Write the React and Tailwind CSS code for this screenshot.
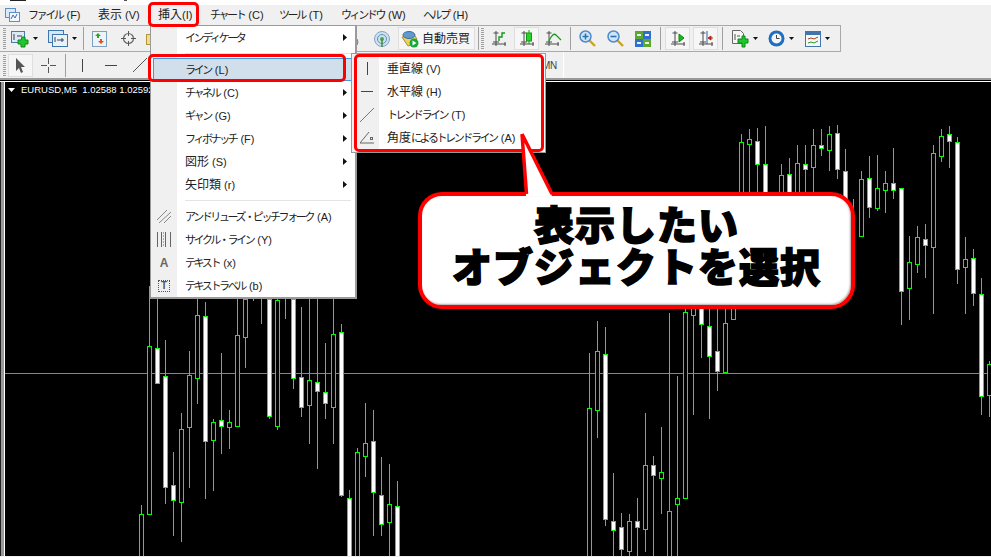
const FONT = "font-['Liberation_Sans','Noto_Sans_CJK_JP',sans-serif]";

// chart data: [x, wickTop, wickBottom, bodyTop, bodyBottom, filled]
const CANDLES = [
  [141, 506, 557, 515, 557, 0], [149, 287, 515, 347, 515, 0], [157, 300, 384, 349, 384, 1],
  [165, 341, 505, 377, 488, 1], [173, 453, 537, 486, 501, 1], [181, 414, 543, 430, 503, 0],
  [189, 352, 489, 376, 428, 0], [197, 300, 405, 316, 379, 0], [205, 303, 500, 317, 442, 1],
  [213, 420, 492, 423, 441, 0], [221, 354, 455, 421, 427, 1], [229, 411, 450, 423, 428, 0],
  [237, 300, 427, 336, 427, 0], [245, 300, 369, 300, 338, 0], [253, 298, 302, 300, 300, 0],
  [261, 298, 325, 300, 300, 0], [269, 298, 420, 300, 417, 1], [277, 298, 431, 301, 427, 0],
  [285, 298, 320, 300, 300, 0], [293, 298, 390, 300, 379, 1], [301, 308, 418, 378, 408, 1],
  [309, 298, 445, 381, 406, 0], [317, 298, 470, 383, 392, 1], [325, 344, 420, 393, 404, 1],
  [333, 298, 445, 335, 408, 0], [341, 325, 498, 333, 496, 1], [349, 491, 557, 499, 557, 1],
  [357, 449, 557, 453, 557, 0], [365, 404, 478, 444, 457, 0], [373, 411, 537, 442, 493, 1],
  [381, 458, 537, 496, 525, 1], [389, 465, 557, 505, 523, 0], [397, 482, 557, 507, 557, 1],
  [589, 354, 557, 409, 557, 0], [597, 322, 439, 352, 411, 0], [605, 328, 527, 355, 520, 1],
  [613, 474, 557, 522, 531, 1], [621, 514, 557, 528, 550, 1], [629, 515, 557, 522, 552, 0],
  [637, 499, 557, 522, 528, 1], [645, 414, 553, 466, 530, 0], [653, 457, 557, 466, 476, 1],
  [661, 428, 515, 473, 479, 0], [669, 314, 557, 512, 557, 0], [677, 377, 557, 499, 505, 0],
  [685, 300, 499, 313, 499, 0], [693, 300, 416, 300, 316, 0], [701, 300, 359, 300, 325, 1],
  [709, 300, 420, 327, 357, 1], [717, 300, 392, 352, 372, 1], [725, 300, 373, 324, 373, 0],
  [733, 300, 320, 300, 320, 0], [741, 135, 200, 143, 200, 0], [749, 130, 200, 140, 145, 0],
  [757, 129, 200, 142, 165, 1], [765, 127, 200, 165, 200, 1], [781, 165, 200, 176, 200, 0],
  [789, 159, 200, 175, 200, 1], [797, 146, 200, 164, 200, 0], [805, 146, 200, 165, 170, 1],
  [813, 130, 200, 146, 168, 0], [821, 130, 157, 146, 149, 1], [829, 127, 172, 135, 151, 0],
  [837, 126, 180, 134, 170, 1], [845, 150, 200, 172, 200, 1], [853, 200, 236, 200, 200, 0],
  [861, 172, 237, 180, 237, 0], [869, 157, 219, 179, 208, 1], [877, 156, 212, 189, 209, 0],
  [885, 172, 214, 184, 191, 0], [893, 149, 200, 184, 191, 1], [901, 189, 326, 189, 292, 1],
  [909, 237, 321, 263, 289, 0], [917, 227, 274, 238, 265, 0], [925, 225, 279, 240, 246, 1],
  [933, 146, 315, 154, 248, 0], [941, 130, 163, 137, 157, 0], [949, 127, 169, 135, 142, 1],
  [957, 138, 285, 143, 270, 1], [965, 238, 315, 260, 268, 0], [973, 250, 307, 259, 294, 1],
  [981, 279, 416, 295, 397, 1], [989, 362, 418, 365, 396, 0],
];

// kana and latin in the original font are narrower than ours, so squeeze those runs
function Jp({ text }) {
  return text.split(/([\u3040-\u30FF]+|[\u4E00-\u9FFF]+)/).map((part, i) => {
    if (/[\u3040-\u30FF]/.test(part)) {
      return <span key={i} className="text-[11px] tracking-[-2.4px] mr-[1px]">{part}</span>;
    }
    if (/[\u4E00-\u9FFF]/.test(part)) {
      return <span key={i}>{part}</span>;
    }
    return <span key={i} className="text-[11px]">{part}</span>;
  });
}

function Grip() {
  return <div className="w-[3px] h-[21px] shrink-0 bg-[repeating-linear-gradient(#a0a0a0_0_1px,transparent_1px_2px)]" />;
}

function Sep({ ml }) {
  return <div className={`w-px h-[23px] bg-[#a0a0a0] shrink-0 ${ml}`} />;
}

function Caret({ className }) {
  return (
    <svg width="5" height="3" className={`shrink-0 ${className}`}>
      <path d="M0 0h5L2.5 3z" fill="#111" />
    </svg>
  );
}

function AppIcon() {
  return (
    <svg width="15" height="14" className="shrink-0 ml-[5px]">
      <rect x="0.5" y="0.5" width="10" height="9" fill="#dbe8f6" stroke="#5d8fc4" />
      <rect x="4.5" y="4.5" width="10" height="9" fill="#f4f8fc" stroke="#5d8fc4" />
      <path d="M6 11l2-4 2 3 2-4" fill="none" stroke="#3a6fb0" />
    </svg>
  );
}

function NewChartIcon({ className }) {
  return (
    <svg width="18" height="18" className={`shrink-0 ${className}`}>
      <rect x="0.5" y="1.5" width="13" height="11" fill="#dfe9f3" stroke="#4b7ba8" />
      <path d="M3 4v6M6 6h5" stroke="#345" />
      <path d="M10 7h3V10h3v4h-3v3h-4v-3H6v-4h3z" transform="translate(1 0)" fill="#1fc72c" stroke="#0b8a18" />
    </svg>
  );
}

function ProfileIcon({ className }) {
  return (
    <svg width="20" height="18" className={`shrink-0 ${className}`}>
      <rect x="0.5" y="0.5" width="15" height="12" fill="#d7e5f3" stroke="#3f77ad" />
      <rect x="4.5" y="4.5" width="15" height="12" fill="#eaf2f9" stroke="#3f77ad" />
      <path d="M7 7v5M9 10h7M14 8v4" stroke="#345" />
    </svg>
  );
}

function MarketIcon({ className }) {
  return (
    <svg width="15" height="16" className={`shrink-0 ${className}`}>
      <rect x="0.5" y="0.5" width="14" height="15" fill="#eef3f8" stroke="#7f9fbf" />
      <path d="M6 2l3 3H7v2H5V5H3z" fill="#2aa52a" />
      <path d="M9 13l-3-3h2V8h2v2h2z" fill="#e0531f" />
    </svg>
  );
}

function CrossIcon({ className }) {
  return (
    <svg width="15" height="15" className={`shrink-0 ${className}`}>
      <circle cx="7.5" cy="7.5" r="5" fill="none" stroke="#666" strokeWidth="1.2" />
      <path d="M7.5 0v5M7.5 10v5M0 7.5h5M10 7.5h5" stroke="#555" />
    </svg>
  );
}

function Axes({ children, w = 16 }) {
  return (
    <svg width={w} height="17" className="shrink-0">
      <path d="M5 1v15M1 14h14M2.5 3h5M14 12v4M2 12h6" stroke="#4a4a4a" fill="none" />
      {children}
    </svg>
  );
}

function Loupe({ sign }) {
  return (
    <svg width="17" height="17" className="shrink-0">
      <path d="M10 10l6 6" stroke="#c9a227" strokeWidth="2.4" />
      <circle cx="6.5" cy="6.5" r="5.5" fill="#cfe6fa" stroke="#4d8cc8" strokeWidth="1.5" />
      <path d={sign} stroke="#2f6fb3" strokeWidth="1.6" />
    </svg>
  );
}

function Pressed({ children, className }) {
  return (
    <div className={`h-[23px] shrink-0 flex items-center justify-center border border-[#dedede] bg-[#f6f6f6] ${className}`}>
      {children}
    </div>
  );
}

function MainToolbar() {
  return (
    <div className="w-[841px] h-[27px] border-t border-b border-r border-[#a9a9a9] flex items-center pl-[3px] bg-[#f0f0f0]">
      <Grip />
      <NewChartIcon className="ml-[5px]" />
      <Caret className="ml-[4px]" />
      <ProfileIcon className="ml-[10px]" />
      <Caret className="ml-[4px]" />
      <Sep ml="ml-[6px]" />
      <MarketIcon className="ml-[8px]" />
      <CrossIcon className="ml-[14px]" />
      <svg width="14" height="14" className="shrink-0 ml-[10px]">
        <rect x="0.5" y="2.5" width="12" height="10" fill="#f3dc8c" stroke="#b5953a" />
      </svg>
      <svg width="18" height="18" className="shrink-0 ml-[185px]">
        <circle cx="9" cy="12" r="4" fill="#dfe7f0" stroke="#5a7fa5" />
      </svg>
      <svg width="16" height="18" className="shrink-0 ml-[11px]">
        <circle cx="8" cy="9" r="7.5" fill="#cfe0ee" stroke="#7fa6c6" />
        <circle cx="8" cy="9" r="4.5" fill="none" stroke="#5f93ba" />
        <circle cx="8" cy="9" r="2" fill="#4fa84f" />
        <path d="M8 9v8" stroke="#3f8f3f" strokeWidth="1.5" />
      </svg>
      <Pressed className="w-[77px] ml-[8px] justify-start pl-[2px]">
        <svg width="18" height="18" className="shrink-0">
          <path d="M1 7l13-1 2 3-6 6-3 1z" fill="#f0d25a" stroke="#a98d2c" />
          <ellipse cx="8" cy="5" rx="6" ry="3.5" fill="#5f9bd0" stroke="#3a6f9f" />
          <circle cx="13" cy="13" r="4.5" fill="#15a83a" />
          <path d="M11.5 10.5l4 2.5-4 2.5z" fill="#fff" />
        </svg>
        <span className="ml-[3px] text-[12px] leading-none text-[#222]">自動売買</span>
      </Pressed>
      <Sep ml="ml-[3px]" />
      <div className="ml-[2px]"><Grip /></div>
      <div className="ml-[7px]">
        <Axes><path d="M8 11V7h3V3h3" fill="none" stroke="#159a15" strokeWidth="1.4" /></Axes>
      </div>
      <Pressed className="w-[25px] ml-[7px]">
        <Axes>
          <path d="M10 0v14" stroke="#159a15" />
          <rect x="7.5" y="3" width="5" height="8" fill="#27d327" stroke="#159a15" />
        </Axes>
      </Pressed>
      <div className="ml-[5px]">
        <Axes w={18}><path d="M5 11q4-9 7-6t5 5" fill="none" stroke="#159a15" strokeWidth="1.2" /></Axes>
      </div>
      <Sep ml="ml-[8px]" />
      <div className="ml-[8px]"><Loupe sign="M3.5 6.5h6M6.5 3.5v6" /></div>
      <div className="ml-[11px]"><Loupe sign="M3.5 6.5h6" /></div>
      <svg width="16" height="16" className="shrink-0 ml-[11px]">
        <rect width="8" height="8" fill="#5da72e" />
        <rect x="8" width="8" height="8" fill="#2f6fd0" />
        <rect y="8" width="8" height="8" fill="#2f6fd0" />
        <rect x="8" y="8" width="8" height="8" fill="#5da72e" />
        <path d="M2 4h4M10 4h4M2 12h4M10 12h4" stroke="#e8f0e8" strokeWidth="2" />
      </svg>
      <Sep ml="ml-[9px]" />
      <Pressed className="w-[25px] ml-[4px]">
        <Axes><path d="M9 4l5 4-5 4z" fill="#1fb51f" stroke="#0d8a0d" /></Axes>
      </Pressed>
      <Pressed className="w-[25px] ml-[3px]">
        <Axes>
          <path d="M9 1v13" stroke="#2e5f9e" />
          <path d="M15 8h-4M13 6l-3 2 3 2z" stroke="#b52a12" fill="#b52a12" />
        </Axes>
      </Pressed>
      <Sep ml="ml-[4px]" />
      <svg width="17" height="18" className="shrink-0 ml-[9px]">
        <path d="M0.5 0.5h8l3 3v10h-11z" fill="#f6f6f6" stroke="#666" />
        <path d="M3 4v6M5 6h3" stroke="#555" />
        <path d="M10 6h3v3h3v4h-3v4h-3v-4H6V9h4z" fill="#1fc72c" stroke="#0b8a18" />
      </svg>
      <Caret className="ml-[4px]" />
      <svg width="17" height="17" className="shrink-0 ml-[10px]">
        <circle cx="8.5" cy="8.5" r="8" fill="#1d6fc0" />
        <circle cx="8.5" cy="8.5" r="5" fill="#f3f6f9" />
        <path d="M8.5 5v3.5h3" stroke="#444" fill="none" />
      </svg>
      <Caret className="ml-[4px]" />
      <svg width="16" height="16" className="shrink-0 ml-[11px]">
        <rect x="0.5" y="0.5" width="15" height="15" fill="#f7f7f7" stroke="#3f77ad" />
        <rect x="1" y="1" width="14" height="3" fill="#3f77ad" />
        <path d="M3 8l3-1 3 1 4-2" fill="none" stroke="#a5401a" />
        <path d="M3 12l3-1 3 1 4-2" fill="none" stroke="#2a9a2a" />
      </svg>
      <Caret className="ml-[4px]" />
    </div>
  );
}

function LineToolbar() {
  return (
    <div className="w-[564px] h-[26px] border-r border-[#fff] flex items-center pl-[3px] bg-[#f0f0f0]">
      <Grip />
      <Pressed className="w-[25px] ml-[2px]">
        <svg width="11" height="15">
          <path d="M1 0v13l3-3 2 5 2-1-2-5h4z" fill="#555" />
        </svg>
      </Pressed>
      <svg width="15" height="15" className="shrink-0 ml-[8px]">
        <path d="M7.5 0v6M7.5 9v6M0 7.5h6M9 7.5h6" stroke="#555" />
      </svg>
      <Sep ml="ml-[9px]" />
      <div className="w-px h-[13px] bg-[#444] shrink-0 ml-[16px]" />
      <div className="w-[12px] h-px bg-[#444] shrink-0 ml-[22px]" />
      <svg width="14" height="14" className="shrink-0 ml-[16px]">
        <path d="M0 14L14 0" stroke="#555" />
      </svg>
      <span className="ml-[395px] text-[10px] tracking-[-0.3px] text-[#444]">MN</span>
    </div>
  );
}

function Chart() {
  return (
    <div className="flex h-[474px]">
      <div className="w-px bg-[#222]" />
      <div className="w-[3px] bg-[#999]" />
      <div className="w-px bg-white" />
      <div className="relative flex-1 bg-black overflow-hidden">
        <svg width="986" height="474" viewBox="5 83 986 474" shapeRendering="crispEdges" className="block">
          <rect x="5" y="374" width="986" height="1" fill="#778899" />
          {CANDLES.map(([x, wt, wb, bt, bb, filled]) => (
            <g key={x}>
              <rect x={x} y={wt} width="1" height={wb - wt} fill="#00ff00" />
              {bb > bt && (
                <rect x={x - 1.5} y={bt + 0.5} width="4" height={bb - bt} fill={filled ? "#fff" : "#000"} stroke="#00ff00" />
              )}
            </g>
          ))}
        </svg>
        <div className="absolute left-[3px] top-[2px] flex items-center gap-[6px] text-white text-[9.5px] leading-[12px] whitespace-nowrap">
          <svg width="7" height="4"><path d="M0 0h7L3.5 4z" fill="#fff" /></svg>
          <span>EURUSD,M5&nbsp;&nbsp;1.02588 1.02592</span>
        </div>
      </div>
    </div>
  );
}

function MenuRow({ text, arrow, icon, active }) {
  return (
    <div className={`h-[23px] flex items-center relative ${active ? "bg-[#d1dfec] border border-[#3f97e6] ml-[2px] mr-[1px]" : ""}`}>
      <div className={`${active ? "w-[23px]" : "w-[26px]"} h-full flex items-center justify-center shrink-0 ${active ? "" : "bg-[#f0f0f0]"}`}>{icon}</div>
      <div className="ml-[8px] text-[12px] leading-none text-[#222] whitespace-nowrap"><Jp text={text} /></div>
      {arrow && (
        <svg width="4" height="7" className="absolute left-[192px] top-[8px]">
          <path d="M0 0l4 3.5L0 7z" fill="#111" />
        </svg>
      )}
    </div>
  );
}

function Gap() {
  return (
    <div className="h-[9px] flex">
      <div className="w-[26px] bg-[#f0f0f0]" />
      <div className="flex-1 flex items-center pl-[8px] pr-[4px]"><div className="h-px w-full bg-[#e4e4e4]" /></div>
    </div>
  );
}

function InsertMenu() {
  return (
    <div className={`absolute left-[150px] top-[25px] w-[207px] border border-[#9a9a9a] border-b-2 border-r-2 bg-white ${FONT}`}>
      <MenuRow text="インディケータ" arrow />
      <Gap />
      <MenuRow text="ライン (L)" active />
      <MenuRow text="チャネル (C)" arrow />
      <MenuRow text="ギャン (G)" arrow />
      <MenuRow text="フィボナッチ (F)" arrow />
      <MenuRow text="図形 (S)" arrow />
      <MenuRow text="矢印類 (r)" arrow />
      <Gap />
      <MenuRow text="アンドリューズ・ピッチフォーク (A)" icon={
        <svg width="14" height="13"><path d="M0 10L10 0M2 13L14 2M7 13L14 6" stroke="#888" /></svg>
      } />
      <MenuRow text="サイクル・ライン (Y)" icon={
        <svg width="14" height="15"><path d="M0.5 0v15M4.5 0v15M8.5 0v15M13.5 0v15" stroke="#666" /><path d="M6.5 0v15" stroke="#aaa" strokeDasharray="2 1" /></svg>
      } />
      <MenuRow text="テキスト (x)" icon={<span className="text-[12px] font-bold text-[#666]">A</span>} />
      <MenuRow text="テキストラベル (b)" icon={
        <div className="w-[12px] h-[12px] border border-dotted border-[#555] flex items-center justify-center text-[10px] font-bold leading-none text-[#555]">T</div>
      } />
    </div>
  );
}

function LineMenu() {
  return (
    <div className={`absolute left-[351px] top-[53px] w-[195px] h-[100px] pt-[3px] pl-[3px] border border-[#9a9a9a] bg-white ${FONT}`}>
      <div className="absolute left-0 top-0 bottom-0 w-[27px] bg-[#f0f0f0]" />
      {[
        ["垂直線 (V)", <div className="w-px h-[13px] bg-[#444]" />],
        ["水平線 (H)", <div className="w-[12px] h-px bg-[#444]" />],
        ["トレンドライン (T)", <svg width="14" height="14"><path d="M0 14L14 0" stroke="#777" /></svg>],
        ["角度によるトレンドライン (A)", (
          <svg width="15" height="13">
            <path d="M0 12L9 1M0 12h14" stroke="#666" fill="none" />
            <rect x="10.5" y="6.5" width="2" height="2" fill="none" stroke="#666" />
          </svg>
        )],
      ].map(([text, icon]) => (
        <div key={text} className="relative h-[23px] flex items-center">
          <div className="w-[24px] flex items-center justify-center shrink-0">{icon}</div>
          <div className="ml-[8px] text-[12px] leading-none text-[#222] whitespace-nowrap"><Jp text={text} /></div>
        </div>
      ))}
    </div>
  );
}

function Callout() {
  return (
    <>
      <div className="absolute left-[418px] top-[192px] w-[437px] h-[117px] pb-[14px] rounded-[24px] border-[4px] border-[#f00] bg-white shadow-[inset_-1px_-1px_2px_#aaa] flex flex-col items-center justify-center font-['Noto_Sans_CJK_JP',sans-serif] font-black text-black text-[40px] leading-[42px] tracking-[1px] [-webkit-text-stroke:1.5px_#000]">
        <div>表示したい</div>
        <div>オブジェクトを選択</div>
      </div>
      <svg width="36" height="66" viewBox="520 131 36 66" className="absolute left-[520px] top-[131px]">
        <path d="M522 134L526 196H552z" fill="#fff" />
        <path d="M522 134L526.5 194M522 134L552 194" fill="none" stroke="#f00" strokeWidth="3.5" />
      </svg>
    </>
  );
}

export default function App() {
  return (
    <div className={`relative w-[991px] h-[557px] overflow-hidden bg-[#f0f0f0] ${FONT}`}>
      <div className="h-[5px] bg-white flex">
        <div className="w-[16px] h-px bg-[#222] ml-[10px]" />
        <div className="w-[3px] h-px bg-[#555] ml-[98px]" />
      </div>
      <div className="h-[20px] flex items-center text-[12px] leading-none text-[#222] whitespace-nowrap">
        <AppIcon />
        <div className="w-[70px] ml-[8px]"><Jp text="ファイル (F)" /></div>
        <div className="w-[60px]"><Jp text="表示 (V)" /></div>
        <div className="w-[52px]"><Jp text="挿入(I)" /></div>
        <div className="w-[69px]"><Jp text="チャート (C)" /></div>
        <div className="w-[62px]"><Jp text="ツール (T)" /></div>
        <div className="w-[82px]"><Jp text="ウィンドウ (W)" /></div>
        <div><Jp text="ヘルプ (H)" /></div>
      </div>
      <MainToolbar />
      <LineToolbar />
      <div className="h-[2px] bg-[#999]" />
      <div className="h-px bg-black" />
      <div className="h-px bg-white" />
      <Chart />

      <InsertMenu />
      <LineMenu />
      <div className="absolute left-[148px] top-[2px] w-[51px] h-[25px] rounded-[5px] border-[3px] border-[#f00]" />
      <div className="absolute left-[148px] top-[54px] w-[198px] h-[28px] rounded-[5px] border-[3px] border-[#f00]" />
      <div className="absolute left-[354px] top-[54px] w-[190px] h-[98px] rounded-[5px] border-[3px] border-[#f00]" />
      <Callout />
    </div>
  );
}
